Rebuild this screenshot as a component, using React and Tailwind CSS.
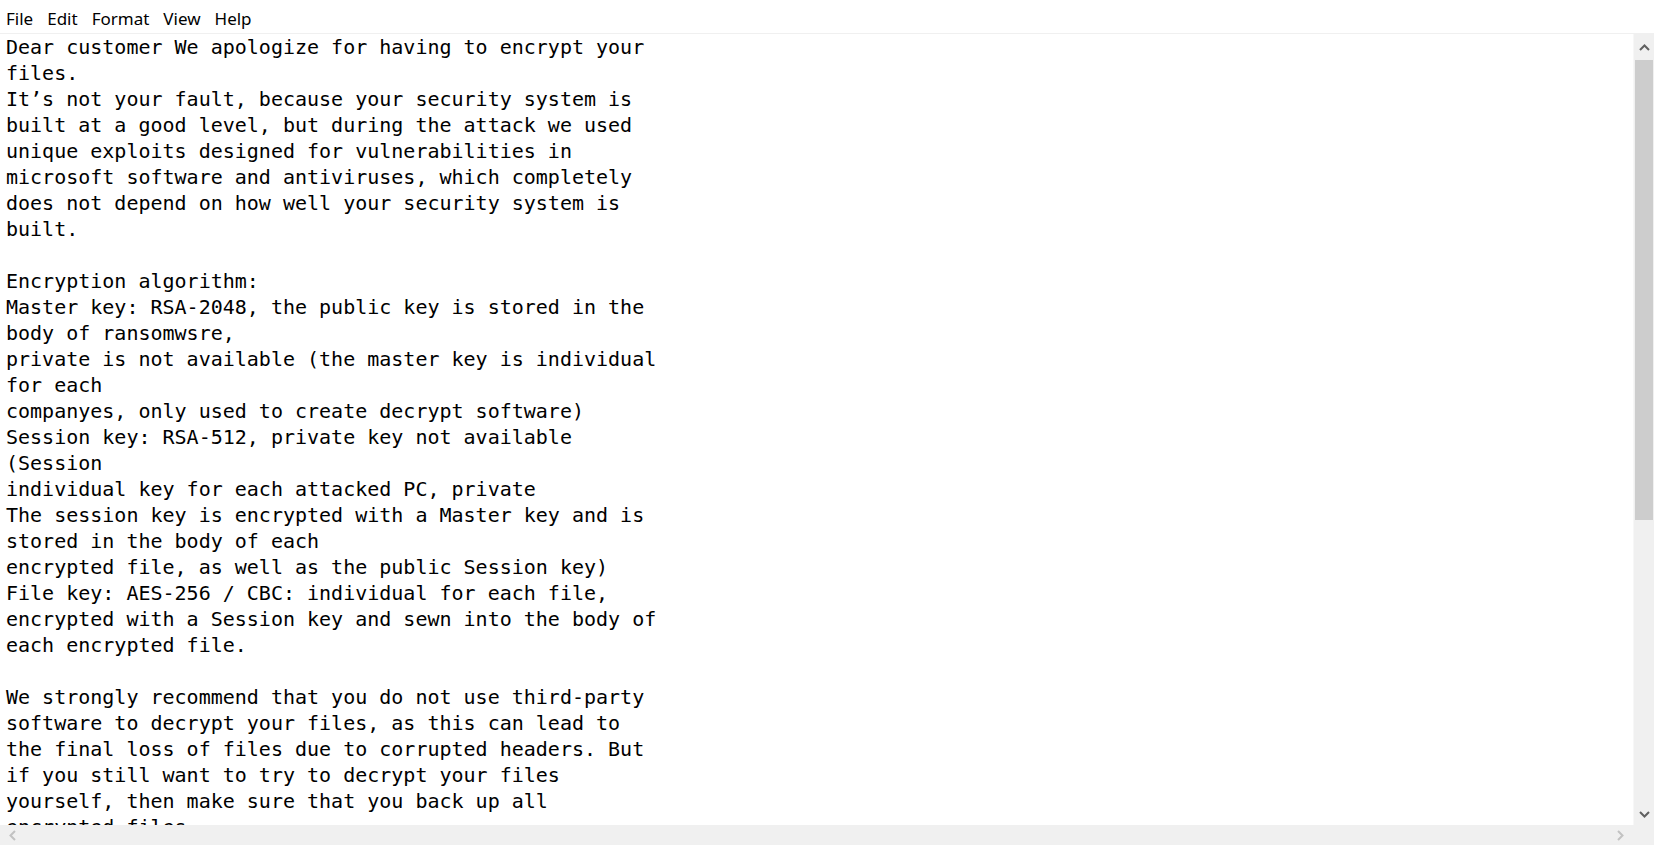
import React from 'react';

const lines = [
    'Dear customer We apologize for having to encrypt your',
    'files.',
    'It’s not your fault, because your security system is',
    'built at a good level, but during the attack we used',
    'unique exploits designed for vulnerabilities in',
    'microsoft software and antiviruses, which completely',
    'does not depend on how well your security system is',
    'built.',
    '',
    'Encryption algorithm:',
    'Master key: RSA-2048, the public key is stored in the',
    'body of ransomwsre,',
    'private is not available (the master key is individual',
    'for each',
    'companyes, only used to create decrypt software)',
    'Session key: RSA-512, private key not available',
    '(Session',
    'individual key for each attacked PC, private',
    'The session key is encrypted with a Master key and is',
    'stored in the body of each',
    'encrypted file, as well as the public Session key)',
    'File key: AES-256 / CBC: individual for each file,',
    'encrypted with a Session key and sewn into the body of',
    'each encrypted file.',
    '',
    'We strongly recommend that you do not use third-party',
    'software to decrypt your files, as this can lead to',
    'the final loss of files due to corrupted headers. But',
    'if you still want to try to decrypt your files',
    'yourself, then make sure that you back up all',
    'encrypted files.',
];

const Chevron = ({ d, color = '#606060' }) => (
    <svg width="11" height="7" viewBox="0 0 11 7">
        <path d={d} fill="none" stroke={color} strokeWidth="2" />
    </svg>
);

const SideChevron = ({ d }) => (
    <svg width="7" height="11" viewBox="0 0 7 11">
        <path d={d} fill="none" stroke="#c2c2c2" strokeWidth="2" />
    </svg>
);

const App = () => {
    const menu = ['File', 'Edit', 'Format', 'View', 'Help'];

    return (
        <div className="w-[1654px] h-[845px] flex flex-col bg-white overflow-hidden">
            {/* Menu bar */}
            <div className="h-[34px] pt-[5px] flex items-center border-b border-[#f0f0f0] font-['Noto_Sans',sans-serif] text-[17px] text-black">
                <div className="flex items-center pl-[6px] gap-[14px]">
                    {menu.map((m) => (
                        <span key={m}>{m}</span>
                    ))}
                </div>
            </div>

            {/* Editor + vertical scrollbar */}
            <div className="flex-1 flex min-h-0">
                <div className="flex-1 overflow-hidden pl-[6px] font-['DejaVu_Sans_Mono',monospace] text-[20px] leading-[26px] text-black">
                    {lines.map((l, i) => (
                        <div key={i} className="whitespace-pre h-[26px]">{l}</div>
                    ))}
                </div>
                <div className="w-[21px] flex flex-col bg-[#f0f0f0] border-l border-[#f7f7f7]">
                    <div className="h-[26px] flex items-center justify-center">
                        <Chevron d="M1 6 L5.5 1.5 L10 6" />
                    </div>
                    <div className="h-[460px] bg-[#cdcdcd] mx-[1px]"></div>
                    <div className="flex-1"></div>
                    <div className="h-[22px] flex items-center justify-center">
                        <Chevron d="M1 1 L5.5 5.5 L10 1" />
                    </div>
                </div>
            </div>

            {/* Horizontal scrollbar */}
            <div className="h-[20px] flex bg-[#f0f0f0]">
                <div className="flex-1 flex items-center justify-between px-[9px]">
                    <SideChevron d="M6 1 L1.5 5.5 L6 10" />
                    <SideChevron d="M1 1 L5.5 5.5 L1 10" />
                </div>
                <div className="w-[21px] bg-[#f0f0f0]"></div>
            </div>
        </div>
    );
};

export default App;
